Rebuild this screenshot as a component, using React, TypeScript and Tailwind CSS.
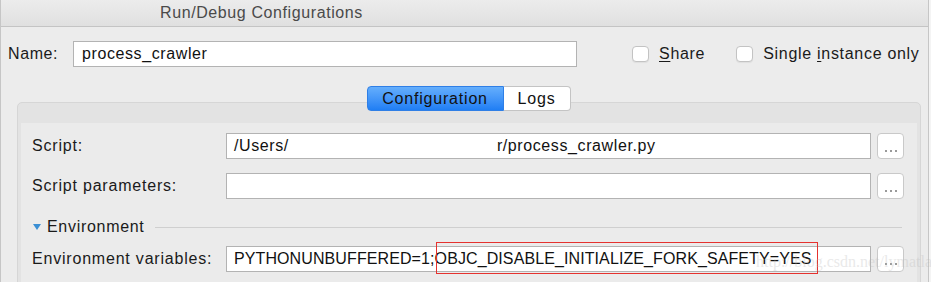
import React from "react";

const font = { fontFamily: '"Liberation Sans", Arial, sans-serif' };

function Checkbox({ children }: { children: React.ReactNode }) {
  return (
    <label className="flex items-center gap-[10px]">
      <span className="h-[16px] w-[17px] rounded-[4px] border border-[#c3c3c3] bg-white shadow-[0_1px_1px_rgba(0,0,0,0.06)]" />
      <span className="text-[16px] tracking-[0.7px] text-[#1a1a1a]">{children}</span>
    </label>
  );
}

function DotsButton() {
  return (
    <div className="flex h-[26px] w-[27px] shrink-0 items-end justify-center gap-[3px] rounded-[4px] border border-[#c9c9c9] bg-white pb-[6px]">
      <span className="h-[2px] w-[2px] bg-[#9a9a9a]" />
      <span className="h-[2px] w-[2px] bg-[#9a9a9a]" />
      <span className="h-[2px] w-[2px] bg-[#9a9a9a]" />
    </div>
  );
}

function Field({ children }: { children?: React.ReactNode }) {
  return (
    <div className="flex h-[26px] flex-1 items-center overflow-hidden whitespace-nowrap border border-[#b3b3b3] bg-white pl-[7px] text-[16px] text-[#111]">
      {children}
    </div>
  );
}

function Row({
  label,
  children,
  overlay,
}: {
  label: string;
  children?: React.ReactNode;
  overlay?: React.ReactNode;
}) {
  return (
    <div className="relative flex items-center">
      <div className="w-[194px] shrink-0 text-[16px] tracking-[0.8px] text-[#1a1a1a]">{label}</div>
      <div className="relative flex flex-1">
        <Field>{children}</Field>
        {overlay}
      </div>
      <div className="ml-[6px]">
        <DotsButton />
      </div>
    </div>
  );
}

export default function App() {
  return (
    <div
      className="h-[282px] w-[931px] overflow-hidden bg-[#f4f4f4]"
      style={font}
    >
      <div className="h-[282px] w-[929px] border-x border-[#c6c6c6] bg-[#ececec]">
        {/* Titelleiste */}
        <div className="flex h-[27px] items-center border-b border-[#c4c4c4] bg-gradient-to-b from-[#ececec] to-[#e0e0e0] pl-[159px] text-[16px] tracking-[0.6px] text-[#4a4a4a]">
          Run/Debug Configurations
        </div>

        {/* Name */}
        <div className="mt-[14px] flex items-center pl-[7px]">
          <span className="w-[65px] text-[16px] tracking-[0.6px] text-[#1a1a1a]">Name:</span>
          <div className="flex h-[26px] w-[504px] items-center border border-[#b3b3b3] bg-white pl-[8px] text-[16px] tracking-[0.6px] text-[#111]">
            process_crawler
          </div>
          <div className="ml-[55px] flex items-center gap-[31px]">
            <Checkbox>
              <span className="underline underline-offset-2">S</span>hare
            </Checkbox>
            <Checkbox>
              Single <span className="underline underline-offset-2">i</span>nstance only
            </Checkbox>
          </div>
        </div>

        {/* Tabs */}
        <div className="relative z-10 mt-[19px] flex justify-center pl-[16px] pr-[8px]">
          <div className="flex h-[25px] text-[16px] tracking-[0.8px]">
            <div className="flex w-[137px] items-center justify-center rounded-l-[4px] border border-[#2f7fe6] bg-gradient-to-b from-[#64aefc] to-[#1f7ef4] text-[#111]">
              Configuration
            </div>
            <div className="flex w-[67px] items-center justify-center rounded-r-[4px] border border-l-0 border-[#c4c4c4] bg-white text-[#111]">
              Logs
            </div>
          </div>
        </div>

        {/* Panel */}
        <div className="ml-[16px] mr-[7px] -mt-[9px] h-[200px] rounded-t-[5px] border border-[#d6d6d6] bg-[#e3e3e3] px-[3px] pt-[20px]">
          <div className="h-full bg-[#ebebeb] pl-[11px] pr-[13px] pt-[10px]">
            <div className="flex flex-col gap-[14px]">
              <Row label="Script:">
                <span className="tracking-[0.6px]">/Users/</span>
                <span className="w-[208px] shrink-0" />
                <span className="tracking-[0.6px]">r/process_crawler.py</span>
              </Row>
              <Row label="Script parameters:" />
            </div>

            <div className="mt-[18px] flex h-[20px] items-center">
              <svg width="8" height="6" viewBox="0 0 8 6" className="ml-[1px]">
                <path d="M0 0 L8 0 L4 6 Z" fill="#3b8fd4" />
              </svg>
              <span className="ml-[6px] text-[16px] tracking-[0.7px] text-[#1a1a1a]">Environment</span>
              <div className="ml-[10px] mr-[2px] h-px flex-1 bg-[#cfcfcf]" />
            </div>

            <div className="mt-[9px]">
              <Row
                label="Environment variables:"
                overlay={
                  <>
                    <div className="pointer-events-none absolute left-[210px] top-[-4px] h-[32px] w-[382px] border-[1.5px] border-[#e5322f]" />
                    <div
                      className="pointer-events-none absolute left-[530px] top-[4px] whitespace-nowrap text-[16px] text-[#b8b8b8] opacity-30"
                      style={{ fontFamily: '"Liberation Serif", serif' }}
                    >
                      http://blog.csdn.net/lymatla
                    </div>
                  </>
                }
              >
                <span className="tracking-[0.1px]">
                  PYTHONUNBUFFERED=1;OBJC_DISABLE_INITIALIZE_FORK_SAFETY=YES
                </span>
              </Row>
            </div>
          </div>
        </div>
      </div>
    </div>
  );
}
